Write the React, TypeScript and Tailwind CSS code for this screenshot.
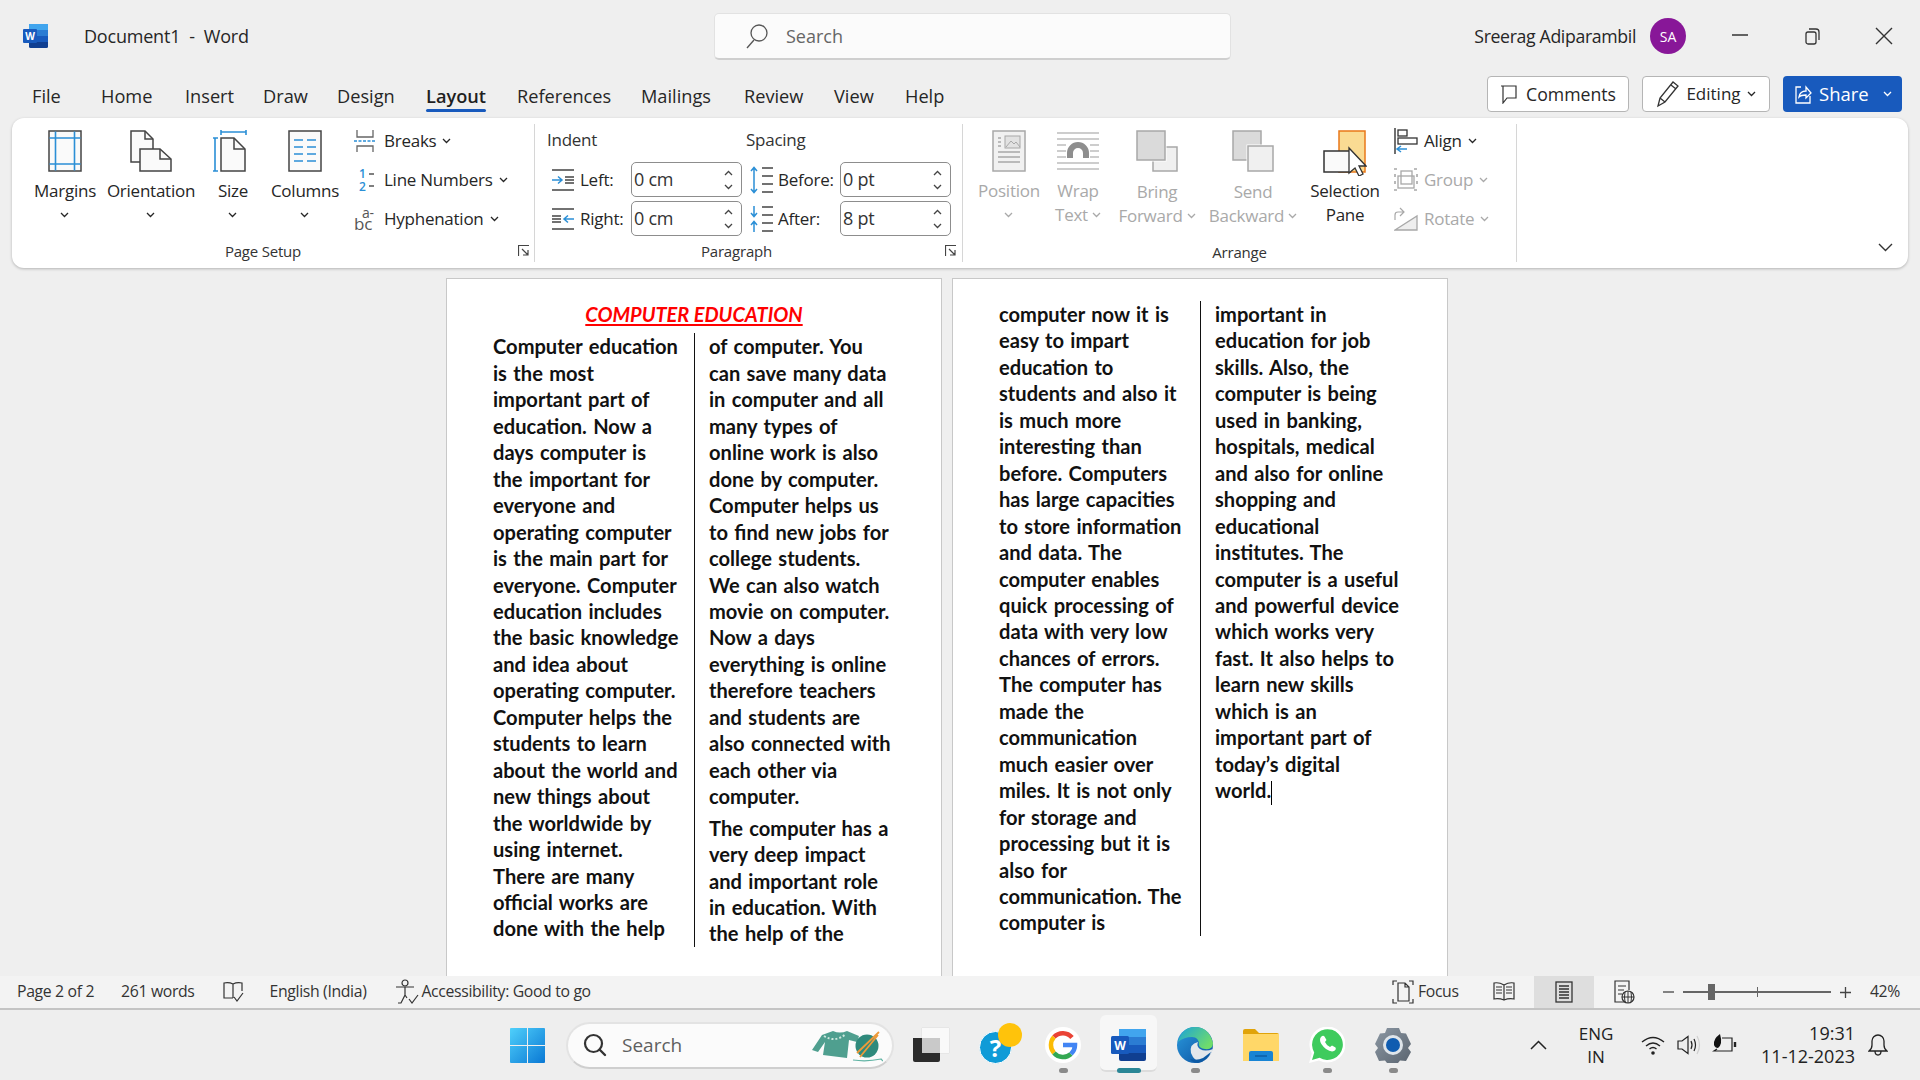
import React from "react";

const col1 = ["Computer education","is the most","important part of","education. Now a","days computer is","the important for","everyone and","operating computer","is the main part for","everyone. Computer","education includes","the basic knowledge","and idea about","operating computer.","Computer helps the","students to learn","about the world and","new things about","the worldwide by","using internet.","There are many","official works are","done with the help"];
const col2a = ["of computer. You","can save many data","in computer and all","many types of","online work is also","done by computer.","Computer helps us","to find new jobs for","college students.","We can also watch","movie on computer.","Now a days","everything is online","therefore teachers","and students are","also connected with","each other via","computer."];
const col2b = ["The computer has a","very deep impact","and important role","in education. With","the help of the"];
const col3 = ["computer now it is","easy to impart","education to","students and also it","is much more","interesting than","before. Computers","has large capacities","to store information","and data. The","computer enables","quick processing of","data with very low","chances of errors.","The computer has","made the","communication","much easier over","miles. It is not only","for storage and","processing but it is","also for","communication. The","computer is"];
const col4 = ["important in","education for job","skills. Also, the","computer is being","used in banking,","hospitals, medical","and also for online","shopping and","educational","institutes. The","computer is a useful","and powerful device","which works very","fast. It also helps to","learn new skills","which is an","important part of","today’s digital"];

const tabs = [
  { name: "File", w: "w-[69px]" },
  { name: "Home", w: "w-[84px]" },
  { name: "Insert", w: "w-[78px]" },
  { name: "Draw", w: "w-[74px]" },
  { name: "Design", w: "w-[89px]" },
  { name: "Layout", w: "w-[91px]" },
  { name: "References", w: "w-[124px]" },
  { name: "Mailings", w: "w-[103px]" },
  { name: "Review", w: "w-[90px]" },
  { name: "View", w: "w-[71px]" },
  { name: "Help", w: "w-[60px]" },
];

function Chev({ className = "" }: { className?: string }) {
  return (
    <svg width="9" height="6" viewBox="0 0 9 6" className={className}>
      <path d="M1 1l3.5 3.5L8 1" fill="none" stroke="currentColor" strokeWidth="1.3" />
    </svg>
  );
}

function Lines({ lines }: { lines: string[] }) {
  return (
    <>
      {lines.map((l, i) => (
        <div key={i} className="whitespace-nowrap">{l}</div>
      ))}
    </>
  );
}

function BigBtn({ w, icon, lines, off, top = "mt-[7px]", chevInline, chevRow = true }: { w: string; icon: React.ReactNode; lines: string[]; off?: boolean; top?: string; chevInline?: boolean; chevRow?: boolean }) {
  return (
    <div className={`${w} flex flex-col items-center pt-[12px] ${off ? "text-[#a9a9a9]" : "text-[#262626]"}`}>
      <div className="h-[42px] flex items-center justify-center">{icon}</div>
      <div className={`${top} text-center leading-[24px]`}>
        {lines.map((l, i) => (
          <div key={i} className="whitespace-nowrap flex items-center justify-center gap-[4px]">
            {l}
            {chevInline && i === lines.length - 1 && <Chev />}
          </div>
        ))}
        {!chevInline && chevRow && (
          <div className="h-[24px] flex items-center justify-center"><Chev /></div>
        )}
      </div>
    </div>
  );
}

function SmallBtn({ icon, label, off }: { icon: React.ReactNode; label: string; off?: boolean }) {
  return (
    <div className={`h-[39px] flex items-center ${off ? "text-[#a9a9a9]" : "text-[#262626]"}`}>
      <div className="w-[30px] flex items-center">{icon}</div>
      <span className="whitespace-nowrap">{label}</span>
      <Chev className="ml-[6px]" />
    </div>
  );
}

function Launcher({ pos }: { pos: string }) {
  return (
    <svg width="12" height="12" viewBox="0 0 12 12" className={`absolute ${pos} top-[4px] text-[#444]`}>
      <path d="M.5 11V.5H11M4 4l6 6M10 5v5H5" fill="none" stroke="currentColor" strokeWidth="1.2" />
    </svg>
  );
}

function GroupLabel({ text, pad = "" }: { text: string; pad?: string }) {
  return <div className={`relative h-[20px] leading-[20px] text-center text-[15px] text-[#333] tracking-[-0.2px] ${pad}`}>{text}</div>;
}

function Spin({ value }: { value: string }) {
  return (
    <div className="h-[35px] w-[111px] rounded-[5px] border border-[#8d8d8d] flex items-center justify-between pl-[2px] pr-[8px] text-[#333]">
      <span className="text-[18px]">{value}</span>
      <div className="flex flex-col gap-[8px] text-[#444]">
        <Chev className="rotate-180" />
        <Chev />
      </div>
    </div>
  );
}

function Field({ icon, label, value, labelW, pad }: { icon: React.ReactNode; label: string; value: string; labelW: string; pad: string }) {
  return (
    <div className="flex items-center h-[35px]">
      <div className={`${pad} w-[28px] box-content flex items-center`}>{icon}</div>
      <span className={`${labelW} whitespace-nowrap`}>{label}</span>
      <Spin value={value} />
    </div>
  );
}

const BLUE = "#2b8fd6";
const DARK = "#444";
const GR = "#a8a8a8";

const MarginsIcon = (
  <svg width="34" height="42" viewBox="0 0 34 42">
    <rect x="1" y="1" width="32" height="40" fill="#fafafa" stroke={DARK} strokeWidth="1.5" />
    <path d="M7.5 1.5v39M26.5 1.5v39M1.5 8h31M1.5 34h31" stroke={BLUE} strokeWidth="1.6" fill="none" />
  </svg>
);
const OrientationIcon = (
  <svg width="42" height="42" viewBox="0 0 42 42" fill="#fafafa" stroke={DARK} strokeWidth="1.5">
    <path d="M1 1h14l8 8v23H1z" />
    <path d="M15 1v8h8" fill="none" />
    <path d="M10 19h20l11 10v12H10z" />
    <path d="M30 19v10h11" fill="none" />
  </svg>
);
const SizeIcon = (
  <svg width="34" height="42" viewBox="0 0 34 42" fill="none" className="mr-[6px]">
    <path d="M8 2h25M8 0v5M33 0v5M2 8v33M0 8h5M0 41h5" stroke={BLUE} strokeWidth="1.6" />
    <path d="M8 8h13l11 11v22H8z" fill="#fafafa" stroke={DARK} strokeWidth="1.5" />
    <path d="M21 8v11h11" stroke={DARK} strokeWidth="1.5" />
  </svg>
);
const ColumnsIcon = (
  <svg width="34" height="42" viewBox="0 0 34 42">
    <rect x="1" y="1" width="32" height="40" fill="#fafafa" stroke={DARK} strokeWidth="1.5" />
    <path d="M6 10h9M19 10h9M6 17h9M19 17h9M6 24h9M19 24h9M6 31h9M19 31h9" stroke={BLUE} strokeWidth="1.6" />
  </svg>
);
const BreaksIcon = (
  <svg width="22" height="24" viewBox="0 0 22 24" fill="none">
    <path d="M3 1v7h16V1M3 23v-6h16v6" stroke="#666" strokeWidth="1.3" />
    <path d="M0 12h22" stroke={BLUE} strokeWidth="1.5" strokeDasharray="3 1.5" />
  </svg>
);
const LineNumIcon = (
  <svg width="22" height="34" viewBox="0 0 22 34" fill="none">
    <text fontSize="12" fill={BLUE} fontFamily="Open Sans" fontWeight="600">
      <tspan x="5" y="15">1</tspan>
      <tspan x="5" y="28">2</tspan>
    </text>
    <path d="M15 11h5M15 23h5" stroke="#555" strokeWidth="1.3" />
  </svg>
);
const HyphenIcon = (
  <svg width="24" height="38" viewBox="0 0 24 38">
    <text fill="#555" fontFamily="Open Sans">
      <tspan x="8" y="18" fontSize="14">a-</tspan>
      <tspan x="0" y="30" fontSize="17">bc</tspan>
    </text>
  </svg>
);
const LeftIcon = (
  <svg width="23" height="24" viewBox="0 0 23 24" fill="none">
    <path d="M0 2h22M0 22h22M13 9h9M13 12h9M13 15h9" stroke={DARK} strokeWidth="1.4" />
    <path d="M0 12h9M6 8.5l4 3.5-4 3.5" stroke={BLUE} strokeWidth="1.5" />
  </svg>
);
const RightIcon = (
  <svg width="23" height="24" viewBox="0 0 23 24" fill="none">
    <path d="M0 2h22M0 22h22M0 9h9M0 12h9M0 15h9" stroke={DARK} strokeWidth="1.4" />
    <path d="M13 12h9M16 8.5L12 12l4 3.5" stroke={BLUE} strokeWidth="1.5" />
  </svg>
);
const BeforeIcon = (
  <svg width="24" height="28" viewBox="0 0 24 28" fill="none">
    <path d="M4 2v24M1 5l3-3.5L7 5M1 23l3 3.5L7 23" stroke={BLUE} strokeWidth="1.5" />
    <path d="M12 2h11M12 10h11M12 18h11M12 26h11" stroke={DARK} strokeWidth="1.4" />
  </svg>
);
const AfterIcon = (
  <svg width="24" height="28" viewBox="0 0 24 28" fill="none">
    <path d="M4 1v10M1 8l3 3.5L7 8M4 27V17M1 20l3-3.5 3 3.5" stroke={BLUE} strokeWidth="1.5" />
    <path d="M12 2h11M12 10h11M12 18h11M12 26h11" stroke={DARK} strokeWidth="1.4" />
  </svg>
);
const PositionIcon = (
  <svg width="34" height="42" viewBox="0 0 34 42" fill="none">
    <rect x="1" y="1" width="32" height="40" fill="#f1f1f1" stroke={GR} strokeWidth="1.5" />
    <rect x="13" y="6" width="15" height="12" fill="#e2e2e2" stroke={GR} />
    <path d="M14 17l5-6 3 3 2-2 4 5" stroke={GR} />
    <path d="M6 8h3M6 12h3M6 16h3M6 22h22M6 27h22M6 32h22" stroke={GR} strokeWidth="1.4" />
  </svg>
);
const WrapIcon = (
  <svg width="42" height="38" viewBox="0 0 42 38" fill="none">
    <path d="M0 1h42M0 7h42M0 13h9M33 13h9M0 19h9M33 19h9M0 25h9M33 25h9M0 31h42M0 37h42" stroke="#bdbdbd" strokeWidth="1.4" />
    <path d="M13 26v-5a8 8 0 0 1 16 0v5" stroke="#8e8e8e" strokeWidth="6" />
  </svg>
);
const BringIcon = (
  <svg width="42" height="42" viewBox="0 0 42 42">
    <rect x="17" y="17" width="24" height="24" fill="#f0f0f0" stroke={GR} strokeWidth="1.5" />
    <rect x="1" y="1" width="28" height="29" fill="#dadada" stroke="#fff" strokeWidth="3" />
    <rect x="1" y="1" width="28" height="29" fill="#dadada" stroke={GR} strokeWidth="1.5" />
  </svg>
);
const SendIcon = (
  <svg width="42" height="42" viewBox="0 0 42 42">
    <rect x="1" y="1" width="28" height="29" fill="#dadada" stroke={GR} strokeWidth="1.5" />
    <rect x="16" y="16" width="25" height="25" fill="#f0f0f0" stroke="#fff" strokeWidth="3" />
    <rect x="16" y="16" width="25" height="25" fill="#f0f0f0" stroke={GR} strokeWidth="1.5" />
  </svg>
);
const SelectionIcon = (
  <svg width="44" height="46" viewBox="0 0 44 46" className="mt-[3px]">
    <rect x="16" y="1" width="26" height="41" fill="#fadb93" stroke="#e9781a" strokeWidth="1.5" />
    <rect x="1" y="21" width="26" height="21" fill="#fafafa" stroke="#333" strokeWidth="1.5" />
    <path d="M26 18v25l6-5 4 8 4-2-4-8h7z" fill="#fff" stroke="#333" strokeWidth="1.3" />
  </svg>
);
const AlignIcon = (
  <svg width="24" height="26" viewBox="0 0 24 26" fill="none">
    <path d="M1 0v26" stroke="#333" strokeWidth="1.4" />
    <rect x="4" y="2" width="9" height="6" stroke="#333" strokeWidth="1.3" />
    <rect x="4" y="10" width="19" height="6" stroke="#333" strokeWidth="1.3" />
    <path d="M13 21H3M7 18l-4 3 4 3" stroke={BLUE} strokeWidth="1.5" />
  </svg>
);
const GroupIcon = (
  <svg width="24" height="24" viewBox="0 0 24 24" fill="none">
    <rect x="7" y="3" width="11" height="13" stroke={GR} strokeWidth="1.3" />
    <rect x="4" y="8" width="16" height="12" stroke={GR} strokeWidth="1.3" />
    <path d="M0 1h3M20 1h3M0 22h3M20 22h3M1 6v3M1 13v3M23 6v3M23 13v3" stroke={GR} strokeWidth="1.6" />
  </svg>
);
const RotateIcon = (
  <svg width="24" height="24" viewBox="0 0 24 24" fill="none">
    <path d="M1 23L23 9v14z" fill="#eee" stroke={GR} strokeWidth="1.3" />
    <path d="M1 13V8q0-3 3-3h6M6 1l4 4-4 4" stroke={GR} strokeWidth="1.2" />
  </svg>
);

function WordTaskIcon({ size = 36 }: { size?: number }) {
  return (
    <svg width={size} height={size} viewBox="0 0 36 36">
      <rect x="8" y="2" width="27" height="32" rx="2" fill="#103f91" />
      <rect x="8" y="2" width="27" height="8" fill="#41a5ee" />
      <rect x="8" y="10" width="27" height="8" fill="#2b7cd3" />
      <rect x="8" y="18" width="27" height="8" fill="#185abd" />
      <rect x="0" y="9" width="18" height="18" rx="1.5" fill="#185abd" />
      <text x="9" y="23" textAnchor="middle" fontSize="12" fontWeight="700" fill="#fff" fontFamily="Open Sans">W</text>
    </svg>
  );
}

function Tray({ children, active, dot }: { children: React.ReactNode; active?: boolean; dot?: boolean }) {
  return (
    <div className="relative w-[66px] h-[70px] flex items-center justify-center">
      {active && <div className="absolute left-[4px] right-[5px] top-[5px] bottom-[8px] bg-[#f7f7f7] rounded-[6px] border-b-2 border-[#dcdcdc]" />}
      <div className="relative">{children}</div>
      {dot && <div className="absolute bottom-[7px] left-[29px] w-[9px] h-[5px] rounded-full bg-[#8a8a8a]" />}
      {active && <div className="absolute bottom-[7px] left-[21px] w-[24px] h-[5px] rounded-full bg-[#2a8696]" />}
    </div>
  );
}

export default function App() {
  return (
    <div className="w-[1920px] h-[1080px] overflow-hidden flex flex-col bg-[#efefef] text-[#262626] font-['Open_Sans',sans-serif]">
      {/* title bar */}
      <div className="h-[72px] relative flex items-center shrink-0">
        <svg width="26" height="26" viewBox="0 0 26 26" className="ml-[23px] mb-[1px]">
          <rect x="6" y="1" width="19" height="24" rx="1.5" fill="#103f91" />
          <rect x="6" y="1" width="19" height="6" fill="#41a5ee" />
          <rect x="6" y="7" width="19" height="6" fill="#2b7cd3" />
          <rect x="6" y="13" width="19" height="6" fill="#185abd" />
          <rect x="0" y="6" width="14" height="14" rx="1" fill="#185abd" />
          <text x="7" y="17" textAnchor="middle" fontSize="10" fontWeight="700" fill="#fff" fontFamily="Open Sans">W</text>
        </svg>
        <span className="ml-[35px] text-[18px] tracking-[-0.2px] whitespace-pre">Document1  -  Word</span>
        <div className="absolute left-[714px] top-[13px] w-[517px] h-[47px] bg-[#fbfbfb] rounded-[5px] border border-[#e2e2e2] border-b-2 border-b-[#cfcfcf] flex items-center text-[#666] text-[18px]">
          <svg width="24" height="26" viewBox="0 0 24 26" fill="none" className="ml-[30px]">
            <circle cx="14" cy="10" r="8" stroke="#555" strokeWidth="1.3" />
            <path d="M9 17l-7 8" stroke="#555" strokeWidth="1.3" />
          </svg>
          <span className="ml-[17px]">Search</span>
        </div>
        <div className="ml-auto flex items-center">
          <span className="text-[17.7px] tracking-[-0.35px] whitespace-nowrap">Sreerag Adiparambil</span>
          <div className="ml-[14px] w-[36px] h-[36px] rounded-full bg-[#881798] text-white text-[14px] flex items-center justify-center">SA</div>
          <svg width="16" height="2" viewBox="0 0 16 2" className="ml-[46px] mb-[2px]"><path d="M0 1h16" stroke="#333" strokeWidth="1.5" /></svg>
          <svg width="16" height="18" viewBox="0 0 16 18" fill="none" className="ml-[57px]">
            <rect x="1" y="5" width="10" height="12" rx="2" stroke="#333" strokeWidth="1.3" />
            <path d="M4 2h7a3 3 0 0 1 3 3v8" stroke="#333" strokeWidth="1.3" />
          </svg>
          <svg width="18" height="18" viewBox="0 0 18 18" className="ml-[54px] mr-[27px]"><path d="M1 1l16 16M17 1L1 17" stroke="#333" strokeWidth="1.4" /></svg>
        </div>
      </div>

      {/* tabs */}
      <div className="h-[46px] flex items-start pl-[32px] pr-[18px] shrink-0 text-[18.2px]">
        {tabs.map((t) => (
          <div key={t.name} className={`${t.w} h-[40px] pt-[12px] leading-[24px]`}>
            <span className={`relative inline-block ${t.name === "Layout" ? "font-semibold text-[#1f1f1f]" : ""}`}>
              {t.name}
              {t.name === "Layout" && <span className="absolute left-0 right-0 top-[25px] h-[3px] bg-[#185abd] rounded-sm" />}
            </span>
          </div>
        ))}
        <div className="ml-auto mt-[4px] flex items-center gap-[13px]">
          <div className="w-[142px] h-[36px] bg-white rounded-[4px] border border-[#b5b5b5] flex items-center gap-[9px] pl-[12px] text-[#262626] text-[17.7px]">
            <svg width="17" height="19" viewBox="0 0 17 19" fill="none"><path d="M1 1h15v12H7l-4 5V1" stroke="#333" strokeWidth="1.2" /></svg>
            <span>Comments</span>
          </div>
          <div className="w-[128px] h-[36px] bg-white rounded-[4px] border border-[#b5b5b5] flex items-center justify-center gap-[6px] text-[17px]">
            <svg width="24" height="28" viewBox="0 0 24 28" fill="none"><path d="M2 26l2-8L17 2l5 4L9 22zM4 18l5 4M15 5l5 4" stroke="#333" strokeWidth="1.3" /></svg>
            <span>Editing</span>
            <Chev />
          </div>
          <div className="w-[119px] h-[36px] bg-[#185abd] rounded-[4px] flex items-center pl-[11px] text-white text-[18.5px]">
            <svg width="18" height="20" viewBox="0 0 18 20" fill="none"><path d="M7 3H2v16h14v-7M5 13q1-6 7-6V3l5 6-5 5v-3q-5 0-7 2z" stroke="#fff" strokeWidth="1.3" /></svg>
            <span className="ml-[7px]">Share</span>
            <Chev className="ml-[14px]" />
          </div>
        </div>
      </div>

      {/* ribbon */}
      <div className="relative z-10 mx-[12px] h-[150px] shrink-0 bg-white rounded-[12px] shadow-[0_1px_3px_rgba(0,0,0,0.25)] flex text-[17px] tracking-[-0.25px]">
        <div className="w-[522px] flex flex-col justify-between pb-[7px] relative">
          <div className="flex pl-[16px]">
            <BigBtn w="w-[74px]" icon={MarginsIcon} lines={["Margins"]} />
            <BigBtn w="w-[98px]" icon={OrientationIcon} lines={["Orientation"]} />
            <BigBtn w="w-[66px]" icon={SizeIcon} lines={["Size"]} />
            <BigBtn w="w-[78px]" icon={ColumnsIcon} lines={["Columns"]} />
            <div className="ml-[10px] pt-[3px]">
              <SmallBtn icon={BreaksIcon} label="Breaks" />
              <SmallBtn icon={LineNumIcon} label="Line Numbers" />
              <SmallBtn icon={HyphenIcon} label="Hyphenation" />
            </div>
          </div>
          <div className="relative"><GroupLabel text="Page Setup" pad="pr-[20px]" /><Launcher pos="right-[4px]" /></div>
        </div>
        <div className="w-px bg-[#d6d6d6] my-[6px]" />

        <div className="w-[427px] flex flex-col justify-between pb-[7px] relative">
          <div className="pl-[12px] pt-[10px]">
            <div className="flex leading-[24px] text-[#333]">
              <span className="w-[199px]">Indent</span>
              <span>Spacing</span>
            </div>
            <div className="flex mt-[10px]">
              <div className="flex flex-col gap-[4px]">
                <Field pad="pl-[5px]" labelW="w-[51px]" icon={LeftIcon} label="Left:" value="0 cm" />
                <Field pad="pl-[5px]" labelW="w-[51px]" icon={RightIcon} label="Right:" value="0 cm" />
              </div>
              <div className="flex flex-col gap-[4px]">
                <Field pad="pl-[8px]" labelW="w-[62px]" icon={BeforeIcon} label="Before:" value="0 pt" />
                <Field pad="pl-[8px]" labelW="w-[62px]" icon={AfterIcon} label="After:" value="8 pt" />
              </div>
            </div>
          </div>
          <div className="relative"><GroupLabel text="Paragraph" pad="pr-[24px]" /><Launcher pos="right-[5px]" /></div>
        </div>
        <div className="w-px bg-[#d6d6d6] my-[6px]" />

        <div className="w-[553px] flex flex-col justify-between pb-[6px]">
          <div className="flex pl-[9px]">
            <BigBtn off w="w-[74px]" icon={PositionIcon} lines={["Position"]} />
            <BigBtn off w="w-[64px]" icon={WrapIcon} lines={["Wrap", "Text"]} chevInline />
            <BigBtn off w="w-[94px]" icon={BringIcon} top="mt-[8px]" lines={["Bring", "Forward"]} chevInline />
            <BigBtn off w="w-[98px]" icon={SendIcon} top="mt-[8px]" lines={["Send", "Backward"]} chevInline />
            <BigBtn w="w-[86px]" icon={SelectionIcon} lines={["Selection", "Pane"]} chevRow={false} />
            <div className="ml-[6px] pt-[3px]">
              <SmallBtn icon={AlignIcon} label="Align" />
              <SmallBtn off icon={GroupIcon} label="Group" />
              <SmallBtn off icon={RotateIcon} label="Rotate" />
            </div>
          </div>
          <GroupLabel text="Arrange" />
        </div>
        <div className="w-px bg-[#d6d6d6] my-[6px]" />
        <div className="flex-1 flex items-end justify-end pr-[15px] pb-[16px] text-[#333]">
          <svg width="15" height="9" viewBox="0 0 15 9" fill="none"><path d="M1 1l6.5 6.5L14 1" stroke="currentColor" strokeWidth="1.4" /></svg>
        </div>
      </div>

      {/* document */}
      <div className="flex-1 min-h-0 overflow-hidden flex justify-center gap-[10px] pt-[10px] pr-[26px] font-['Lato',sans-serif] font-bold text-[20.1px] leading-[26.45px] text-[#111] [word-spacing:1.5px]">
        <div className="w-[496px] h-[740px] shrink-0 bg-white border border-[#c8c8c8] pt-[22px]">
          <div className="text-center text-[20px] italic text-[#ff0000] underline underline-offset-[2px] decoration-[1.5px] [word-spacing:0]">COMPUTER EDUCATION</div>
          <div className="flex mt-[6px] pl-[46px]">
            <div className="w-[201px] shrink-0"><Lines lines={col1} /></div>
            <div className="border-l border-[#111] pl-[14px]">
              <Lines lines={col2a} />
              <div className="mt-[5px]"><Lines lines={col2b} /></div>
            </div>
          </div>
        </div>
        <div className="w-[496px] h-[740px] shrink-0 bg-white border border-[#c8c8c8] pt-[22px]">
          <div className="flex pl-[46px]">
            <div className="w-[201px] shrink-0"><Lines lines={col3} /></div>
            <div className="border-l border-[#111] pl-[14px]">
              <Lines lines={col4} />
              <div>world.<span className="inline-block w-px h-[24px] bg-black align-middle" /></div>
            </div>
          </div>
        </div>
      </div>

      {/* status bar */}
      <div className="h-[34px] shrink-0 relative z-10 bg-[#f3f3f3] border-b-2 border-[#c4c4c4] flex items-center text-[15.8px] text-[#333] tracking-[-0.35px]">
        <span className="ml-[17px] whitespace-nowrap">Page 2 of 2</span>
        <span className="ml-[27px] whitespace-nowrap">261 words</span>
        <svg width="21" height="22" viewBox="0 0 21 22" fill="none" className="ml-[28px]">
          <path d="M10 3v14M10 3Q6 1 1 2v15h9M10 3q4-2 9-1v8M11 16l3 4 6-8" stroke="#333" strokeWidth="1.2" />
        </svg>
        <span className="ml-[26px] whitespace-nowrap">English (India)</span>
        <svg width="24" height="26" viewBox="0 0 24 26" fill="none" className="ml-[29px]">
          <circle cx="10" cy="4" r="3" stroke="#333" strokeWidth="1.2" />
          <path d="M1 8h18M10 8v8l-4 8h-3M10 16l2 3M14 20l3 4 6-8" stroke="#333" strokeWidth="1.2" />
        </svg>
        <span className="ml-[2px] whitespace-nowrap">Accessibility: Good to go</span>
        <div className="ml-auto flex items-center h-full">
          <svg width="22" height="24" viewBox="0 0 22 24" fill="none">
            <path d="M1 5V1h4M17 1h4v4M1 19v4h4M17 23h4v-4M6 3h7l4 4v14H6z M13 3v4h4" stroke="#333" strokeWidth="1.2" />
          </svg>
          <span className="ml-[4px] w-[75px]">Focus</span>
          <svg width="22" height="20" viewBox="0 0 22 20" fill="none">
            <path d="M11 3v15M11 3Q6 0 1 1v16q5-1 10 1 5-2 10-1V1q-5-1-10 2zM3 5h6M3 8h6M3 11h6M13 5h6M13 8h6M13 11h6" stroke="#333" strokeWidth="1.2" />
          </svg>
          <div className="ml-[19px] w-[60px] h-full bg-[#dedede] flex items-center justify-center">
            <svg width="18" height="22" viewBox="0 0 18 22" fill="none">
              <rect x="1" y="1" width="16" height="20" stroke="#333" strokeWidth="1.3" />
              <path d="M4 5h10M4 8h10M4 11h10M4 14h10M4 17h10" stroke="#333" strokeWidth="1.3" />
            </svg>
          </div>
          <svg width="22" height="24" viewBox="0 0 22 24" fill="none" className="ml-[19px]">
            <path d="M13 22H2V1h14v9M5 6h8M5 10h6M5 14h4" stroke="#333" strokeWidth="1.2" />
            <circle cx="15" cy="17" r="6" stroke="#333" strokeWidth="1.2" />
            <path d="M9 17h12M15 11v12M12 12q-1 5 0 10M18 12q1 5 0 10" stroke="#333" strokeWidth="1" />
          </svg>
          <svg width="11" height="2" viewBox="0 0 11 2" className="ml-[28px]"><path d="M0 1h11" stroke="#444" strokeWidth="1.3" /></svg>
          <div className="relative ml-[9px] w-[148px] h-[2px] bg-[#666]">
            <div className="absolute left-[25px] -top-[7px] w-[7px] h-[16px] bg-[#666]" />
            <div className="absolute left-[74px] -top-[4px] w-px h-[10px] bg-[#666]" />
          </div>
          <svg width="11" height="11" viewBox="0 0 11 11" className="ml-[9px]"><path d="M0 5.5h11M5.5 0v11" stroke="#444" strokeWidth="1.3" /></svg>
          <span className="ml-[19px] mr-[20px]">42%</span>
        </div>
      </div>

      {/* taskbar */}
      <div className="h-[70px] shrink-0 bg-[#eeeeee] flex items-center pl-[494px]">
        <Tray>
          <svg width="35" height="35" viewBox="0 0 35 35">
            <defs>
              <linearGradient id="winA" x1="0" y1="0" x2="1" y2="1"><stop offset="0" stopColor="#4fd0fb" /><stop offset="1" stopColor="#0a78d4" /></linearGradient>
            </defs>
            <path d="M0 1a1 1 0 0 1 1-1h16v17H0zM18 0h16a1 1 0 0 1 1 1v16H18zM0 18h17v17H1a1 1 0 0 1-1-1zM18 18h17v16a1 1 0 0 1-1 1H18z" fill="url(#winA)" />
          </svg>
        </Tray>
        <div className="ml-[6px] w-[328px] h-[47px] rounded-full bg-[#fbfbfb] border-2 border-[#e3e3e3] border-b-[#cfcfcf] flex items-center text-[#5f5f5f] text-[19px]">
          <svg width="24" height="24" viewBox="0 0 24 24" fill="none" className="ml-[15px]">
            <circle cx="10.5" cy="10.5" r="8.5" stroke="#333" strokeWidth="2.2" />
            <path d="M16.5 16.5L22 22" stroke="#333" strokeWidth="2.4" strokeLinecap="round" />
          </svg>
          <span className="ml-[15px]">Search</span>
          <svg width="72" height="38" viewBox="0 0 72 38" className="ml-auto mr-[9px]">
            <path d="M1 24L11 9l11-4q7 3 14 0l12 5-2 6-8-2-2 18-24-3 2-13-7 10z" fill="#4f9f8f" />
            <path d="M13 10q11 7 22-2" fill="none" stroke="#cfe8df" strokeWidth="2" strokeDasharray="2 2" />
            <circle cx="56" cy="20" r="11.5" fill="#2f8a7c" />
            <path d="M46 27L68 6M49 31L67 9" stroke="#ee9a3a" strokeWidth="1.8" />
            <path d="M42 34q14 2 28-1l2 2" fill="none" stroke="#5fb3a3" strokeWidth="1.2" />
          </svg>
        </div>
        <div className="ml-[4px]">
          <Tray>
            <div className="relative w-[36px] h-[35px]">
              <div className="absolute left-[9px] top-0 w-[27px] h-[25px] bg-[#f9f9f9] shadow-[0_0_1px_rgba(0,0,0,0.2)]" />
              <div className="absolute left-0 top-[10px] w-[27px] h-[24px] bg-[#2b2b2b] rounded-b-[2px]" />
              <div className="absolute left-[9px] top-[10px] w-[18px] h-[15px] bg-[#c9c9c9]" />
            </div>
          </Tray>
        </div>
        <Tray>
          <div className="relative w-[36px] h-[36px]">
            <div className="absolute left-0 top-[4px] w-[33px] h-[33px] rounded-full bg-[#0f9bd7] border border-white flex items-center justify-center text-white text-[24px] font-bold leading-none">?</div>
            <div className="absolute left-[19px] -top-[4px] w-[24px] h-[24px] rounded-full bg-[#ffc30b]" />
          </div>
        </Tray>
        <Tray dot>
          <svg width="36" height="36" viewBox="0 0 36 36" fill="none">
            <circle cx="18" cy="18" r="18" fill="#fff" />
            <path d="M27 10.5A12 12 0 0 0 9 10" stroke="#ea4335" strokeWidth="4.5" />
            <path d="M9 10a12 12 0 0 0 0 16" stroke="#fbbc05" strokeWidth="4.5" />
            <path d="M9 26a12 12 0 0 0 17 1" stroke="#34a853" strokeWidth="4.5" />
            <path d="M26 27q4-4 4-9H18" stroke="#4285f4" strokeWidth="4.5" />
          </svg>
        </Tray>
        <Tray active><WordTaskIcon /></Tray>
        <Tray dot>
          <svg width="36" height="36" viewBox="0 0 36 36">
            <defs>
              <linearGradient id="edgeA" x1="0" y1="0" x2="1" y2="0.6"><stop offset="0" stopColor="#1aa3d9" /><stop offset="1" stopColor="#6fdc6b" /></linearGradient>
              <linearGradient id="edgeB" x1="0" y1="0" x2="1" y2="1"><stop offset="0" stopColor="#2a9ade" /><stop offset="1" stopColor="#0b4f9e" /></linearGradient>
            </defs>
            <circle cx="18" cy="18" r="18" fill="url(#edgeB)" />
            <path d="M1 15Q5 0 18 0q14 0 18 16 0 7-8 6-6-1-6-4 0-8-7-8-8 0-14 5z" fill="url(#edgeA)" />
            <path d="M36 22q-8 3-13 0-4-3-2-7-9 2-7 11 3 8 10 9 9-3 12-13z" fill="#eeeeee" opacity="0.95" />
            <path d="M34 25q-3 9-13 11-5 0-8-4 7 2 13-1z" fill="#0c59a4" />
          </svg>
        </Tray>
        <Tray>
          <svg width="36" height="32" viewBox="0 0 36 32">
            <path d="M0 2q0-2 2-2h10l4 4h18q2 0 2 2v4H0z" fill="#e0a30a" />
            <path d="M0 5h36v27H0z" fill="#ffd768" />
            <path d="M6 32v-8q0-2 2-2h20q2 0 2 2v8z" fill="#1884d4" />
            <path d="M12 27h12" stroke="#0b5ea6" strokeWidth="1.5" />
          </svg>
        </Tray>
        <Tray dot>
          <svg width="36" height="36" viewBox="0 0 36 36">
            <path d="M0 36l2.8-9.6A18 18 0 1 1 10 33.4z" fill="#fff" />
            <path d="M3 33l2.2-7.6A15.4 15.4 0 1 1 10.6 30.8z" fill="#3ecb5d" />
            <path d="M12 10q2-2 3.5-.5l2 3.5-1.5 2q1.5 3.5 5 5l2-1.5 3.5 2q1 2-1.5 3.5-3 1.5-8-2-6-5-6-9 0-2 1-3z" fill="#fff" />
          </svg>
        </Tray>
        <Tray dot>
          <svg width="36" height="36" viewBox="0 0 36 36">
            <defs>
              <linearGradient id="gearA" x1="0" y1="0" x2="1" y2="1"><stop offset="0" stopColor="#8b97a3" /><stop offset="1" stopColor="#5b6570" /></linearGradient>
            </defs>
            <path d="M12 1h12l2 5 5 .5 5 10.5-3 4 3 4-5 9-6-.5-2 2.5H12l-2-2.5-6 .5-4-9 3-4-3-4 5-10.5 5-.5z" fill="url(#gearA)" />
            <circle cx="18" cy="18" r="10" fill="#dfe5ea" />
            <circle cx="18" cy="18" r="7" fill="#0f5cb0" />
          </svg>
        </Tray>
        <div className="ml-auto flex items-center text-[#222]">
          <svg width="17" height="10" viewBox="0 0 17 10" fill="none"><path d="M1 9l7.5-7.5L16 9" stroke="#222" strokeWidth="1.5" /></svg>
          <div className="ml-[25px] w-[48px] text-center text-[17px] leading-[23px]">ENG<br />IN</div>
          <svg width="24" height="20" viewBox="0 0 24 20" fill="none" className="ml-[21px]">
            <path d="M1 7q11-9 22 0M5 11q7-6 14 0M8.5 14q3.5-3 7 0" stroke="#222" strokeWidth="1.4" />
            <circle cx="12" cy="18" r="1.8" fill="#222" />
          </svg>
          <svg width="24" height="20" viewBox="0 0 24 20" fill="none" className="ml-[12px]">
            <path d="M1 6h4l6-4.5v17L5 14H1z" stroke="#222" strokeWidth="1.2" />
            <path d="M14 6q2 4 0 8M17 4q3 6 0 12" stroke="#222" strokeWidth="1.2" />
            <path d="M20 1q5 9 0 18" stroke="#cfcfcf" strokeWidth="1.2" />
          </svg>
          <svg width="26" height="24" viewBox="0 0 26 24" fill="none" className="ml-[11px]">
            <path d="M10 5h10v13H2l3-2" stroke="#222" strokeWidth="1.2" />
            <path d="M23 9v5" stroke="#222" strokeWidth="2.4" />
            <path d="M8 1Q1 6 2 12q1 3 4 3 5-4 2-14z" fill="#111" />
          </svg>
          <div className="ml-[14px] w-[103px] text-right text-[18px] leading-[23px] whitespace-nowrap">19:31<br />11-12-2023</div>
          <svg width="20" height="24" viewBox="0 0 20 24" fill="none" className="ml-[13px] mr-[32px]">
            <path d="M1 18q3-2 3-6V8a6 6 0 0 1 12 0v4q0 4 3 6zM7 18q0 4 3 4t3-4" stroke="#222" strokeWidth="1.3" />
          </svg>
        </div>
      </div>
    </div>
  );
}
